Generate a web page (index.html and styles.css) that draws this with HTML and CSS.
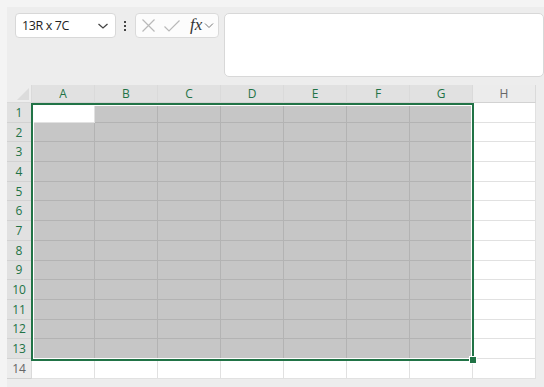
FILE: index.html
```html
<!DOCTYPE html>
<html lang="en">
<head>
  <meta charset="UTF-8">
  <meta name="viewport" content="width=device-width, initial-scale=1.0">
  <title>Sheet</title>
  <link rel="stylesheet" href="styles.css">
</head>
<body>
  <div class="panel">
    <div class="toolbar">
      <div class="name-box">
        <span class="name-text">13R x 7C</span>
        <svg class="chevron" width="12" height="8" viewBox="0 0 12 8"><path d="M1.5 2 L6 6 L10.5 2" fill="none" stroke="#444" stroke-width="1.3"/></svg>
      </div>
      <div class="dots"><span></span><span></span><span></span></div>
      <div class="fx-buttons">
        <svg width="15" height="15" viewBox="0 0 15 15"><path d="M1.5 1.5 L13.5 13.5 M13.5 1.5 L1.5 13.5" stroke="#b9b9b9" stroke-width="1.2"/></svg>
        <svg class="check" width="18" height="14" viewBox="0 0 18 14"><path d="M1.5 7.5 L6 12 L16.5 1.5" fill="none" stroke="#b9b9b9" stroke-width="1.2"/></svg>
        <span class="fx">fx</span>
        <svg width="10" height="7" viewBox="0 0 10 7"><path d="M1 1.5 L5 5.5 L9 1.5" fill="none" stroke="#777" stroke-width="1"/></svg>
      </div>
      <div class="formula-bar"></div>
    </div>

    <div class="sheet">
      <div class="grid" id="grid"></div>
      <div class="selection"><div class="handle"></div></div>
    </div>
  </div>

  <script>
    const grid = document.getElementById('grid');
    const cols = ['A', 'B', 'C', 'D', 'E', 'F', 'G', 'H'];

    const corner = document.createElement('div');
    corner.className = 'corner';
    grid.appendChild(corner);

    cols.forEach((c, i) => {
      const head = document.createElement('div');
      head.className = i < 7 ? 'col-head on' : 'col-head';
      head.textContent = c;
      grid.appendChild(head);
    });

    for (let r = 1; r <= 14; r++) {
      const rowHead = document.createElement('div');
      rowHead.className = r <= 13 ? 'row-head on' : 'row-head';
      rowHead.textContent = r;
      grid.appendChild(rowHead);

      cols.forEach((c, i) => {
        const cell = document.createElement('div');
        cell.className = 'cell';
        if (r <= 13 && i < 7 && !(r === 1 && i === 0)) cell.className += ' sel';
        grid.appendChild(cell);
      });
    }
  </script>
</body>
</html>
```

FILE: styles.css
```css
body {
  margin: 0;
  background-color: #f4f4f4;
  font-family: "Open Sans", "Noto Sans", Arial, sans-serif;
  overflow: hidden;
}
.panel {
  margin: 7px 0 0 7px;
  height: 380px;
  background-color: #ededed;
}
.toolbar {
  display: flex;
  align-items: flex-start;
  padding: 6px 0 0 8px;
  height: 72px;
}
.name-box {
  display: flex;
  align-items: center;
  justify-content: space-between;
  flex-shrink: 0;
  box-sizing: border-box;
  width: 101px;
  height: 25px;
  padding: 0 6px 0 6px;
  background-color: #fff;
  border: 1px solid #d8d8d8;
  border-radius: 4px;
}
.name-text {
  font-size: 12.5px;
  color: #222;
  letter-spacing: -0.4px;
}
.dots {
  display: flex;
  flex-direction: column;
  align-items: center;
  flex-shrink: 0;
  gap: 2px;
  width: 10px;
  margin: 8px 5px 0 4px;
}
.dots span {
  width: 2px;
  height: 2px;
  background-color: #444;
}
.fx-buttons {
  display: flex;
  align-items: center;
  flex-shrink: 0;
  box-sizing: border-box;
  width: 84px;
  height: 25px;
  padding: 0 0 0 5px;
  background-color: #fcfcfc;
  border: 1px solid #dadada;
  border-radius: 4px;
}
.check {
  margin-left: 7px;
}
.fx {
  margin: -2px 2px 0 9px;
  font-family: "Liberation Serif", "DejaVu Serif", serif;
  font-style: italic;
  font-size: 17px;
  color: #333;
}
.formula-bar {
  flex-shrink: 0;
  box-sizing: border-box;
  width: 320px;
  height: 64px;
  margin-left: 5px;
  background-color: #fff;
  border: 1px solid #d8d8d8;
  border-radius: 5px;
}
.sheet {
  position: relative;
  width: 530px;
}
.grid {
  display: grid;
  grid-template-columns: 25px repeat(8, 63px);
  grid-template-rows: 18px repeat(14, 19.7px);
}
.corner {
  position: relative;
  background-color: #ededed;
  border-right: 1px solid #dadada;
  border-bottom: 1px solid #dadada;
  box-sizing: border-box;
}
.corner::after {
  content: "";
  position: absolute;
  right: 2px;
  bottom: 2px;
  width: 12px;
  height: 12px;
  background-color: #dcdcdc;
  clip-path: polygon(100% 0, 100% 100%, 0 100%);
}
.col-head,
.row-head {
  display: flex;
  align-items: center;
  justify-content: center;
  box-sizing: border-box;
  font-size: 12px;
  color: #666;
  background-color: #ececec;
  border-right: 1px solid #dadada;
  border-bottom: 1px solid #d2d2d2;
}
.col-head.on,
.row-head.on {
  color: #217346;
  background-color: #e1e1e1;
}
.cell {
  box-sizing: border-box;
  background-color: #fff;
  border-right: 1px solid #e1e1e1;
  border-bottom: 1px solid #e1e1e1;
}
.cell.sel {
  background-color: #c6c6c6;
  border-right-color: #b3b3b3;
  border-bottom-color: #b3b3b3;
}
.selection {
  position: absolute;
  left: 24px;
  top: 18px;
  width: 443px;
  height: 258px;
  box-sizing: border-box;
  border: 2px solid #217346;
  box-shadow: inset 0 0 0 1px #fff;
}
.handle {
  position: absolute;
  right: -5px;
  bottom: -5px;
  width: 6px;
  height: 6px;
  background-color: #217346;
  border: 1px solid #fff;
}
```
